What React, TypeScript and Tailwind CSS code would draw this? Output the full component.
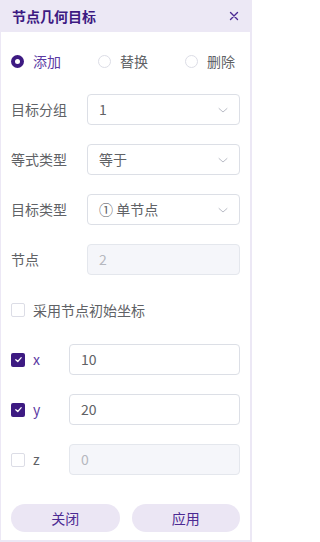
import React from "react";

const font = { fontFamily: '"Noto Sans CJK SC", "Noto Sans", sans-serif' };

function Chevron() {
  return (
    <svg width="12" height="12" viewBox="0 0 12 12" fill="none" stroke="#b9bcc6" strokeWidth="1" strokeLinecap="round" strokeLinejoin="round">
      <path d="M2 4.5 L6 8 L10 4.5" />
    </svg>
  );
}

function Radio({ checked, label }: { checked?: boolean; label: string }) {
  return (
    <div className="flex items-center gap-[9px]">
      {checked ? (
        <span className="w-[13px] h-[13px] rounded-full bg-[#3d1a82] flex items-center justify-center">
          <span className="w-[5px] h-[5px] rounded-full bg-white" />
        </span>
      ) : (
        <span className="w-[13px] h-[13px] rounded-full border border-[#dcdde6] bg-white" />
      )}
      <span className={checked ? "text-[14px] text-[#5b3aa3]" : "text-[14px] text-[#606266]"}>{label}</span>
    </div>
  );
}

function Check({ checked }: { checked?: boolean }) {
  return checked ? (
    <span className="w-[14px] h-[14px] rounded-[2px] bg-[#3d1a82] flex items-center justify-center">
      <svg width="9" height="9" viewBox="0 0 10 10" fill="none" stroke="white" strokeWidth="1.4" strokeLinecap="round" strokeLinejoin="round">
        <path d="M2 5.2 L4.2 7.2 L8 3" />
      </svg>
    </span>
  ) : (
    <span className="w-[14px] h-[14px] rounded-[2px] border border-[#dcdde6] bg-white" />
  );
}

function SelectRow({ label, value }: { label: string; value: string }) {
  return (
    <div className="flex items-center h-[31px]">
      <span className="w-[76px] text-[14px] text-[#606266]">{label}</span>
      <div className="flex-1 h-[31px] border border-[#dcdfe6] rounded-[4px] flex items-center justify-between pl-[11px] pr-[10px]">
        <span className="text-[14px] text-[#606266]">{value}</span>
        <Chevron />
      </div>
    </div>
  );
}

export default function App() {
  return (
    <div className="w-[252px] h-[542px] bg-[#ece8f5] flex flex-col" style={font}>
      <div className="h-[32px] flex items-center justify-between pl-[12px] pr-[13px] shrink-0">
        <span className="text-[14px] font-bold text-[#3d1a82]">节点几何目标</span>
        <svg width="10" height="10" viewBox="0 0 10 10" stroke="#4b2a93" strokeWidth="1.4" strokeLinecap="round">
          <path d="M1.5 1.5 L8.5 8.5 M8.5 1.5 L1.5 8.5" />
        </svg>
      </div>
      <div className="flex-1 bg-white ml-[1px] mr-[2px] mb-[2px] flex flex-col pl-[10px] pr-[10px]">
        <div className="flex items-center justify-between mt-[21px] h-[16px] pr-[5px]">
          <Radio checked label="添加" />
          <Radio label="替换" />
          <Radio label="删除" />
        </div>
        <div className="mt-[25px] flex flex-col gap-[19px]">
          <SelectRow label="目标分组" value="1" />
          <SelectRow label="等式类型" value="等于" />
          <SelectRow label="目标类型" value="① 单节点" />
          <div className="flex items-center h-[31px]">
            <span className="w-[76px] text-[14px] text-[#606266]">节点</span>
            <div className="flex-1 h-[31px] border border-[#e4e7ed] bg-[#f5f6fa] rounded-[4px] flex items-center pl-[11px]">
              <span className="text-[14px] text-[#b6b8bf]">2</span>
            </div>
          </div>
        </div>
        <div className="mt-[28px] flex items-center gap-[8px] h-[14px]">
          <Check />
          <span className="text-[14px] text-[#606266]">采用节点初始坐标</span>
        </div>
        <div className="mt-[27px] flex flex-col gap-[19px]">
          <div className="flex items-center h-[31px]">
            <div className="w-[58px] flex items-center gap-[8px]">
              <Check checked />
              <span className="text-[14px] text-[#5b3aa3]">x</span>
            </div>
            <div className="flex-1 h-[31px] border border-[#dcdfe6] rounded-[4px] flex items-center pl-[11px]">
              <span className="text-[14px] text-[#606266]">10</span>
            </div>
          </div>
          <div className="flex items-center h-[31px]">
            <div className="w-[58px] flex items-center gap-[8px]">
              <Check checked />
              <span className="text-[14px] text-[#5b3aa3]">y</span>
            </div>
            <div className="flex-1 h-[31px] border border-[#dcdfe6] rounded-[4px] flex items-center pl-[11px]">
              <span className="text-[14px] text-[#606266]">20</span>
            </div>
          </div>
          <div className="flex items-center h-[31px]">
            <div className="w-[58px] flex items-center gap-[8px]">
              <Check />
              <span className="text-[14px] text-[#606266]">z</span>
            </div>
            <div className="flex-1 h-[31px] border border-[#e4e7ed] bg-[#f5f6fa] rounded-[4px] flex items-center pl-[11px]">
              <span className="text-[14px] text-[#b6b8bf]">0</span>
            </div>
          </div>
        </div>
        <div className="mt-[29px] flex gap-[12px]">
          <button className="flex-1 h-[28px] rounded-full bg-[#ebe6f4] text-[14px] text-[#4b2a93]">关闭</button>
          <button className="flex-1 h-[28px] rounded-full bg-[#ebe6f4] text-[14px] text-[#4b2a93]">应用</button>
        </div>
      </div>
    </div>
  );
}
